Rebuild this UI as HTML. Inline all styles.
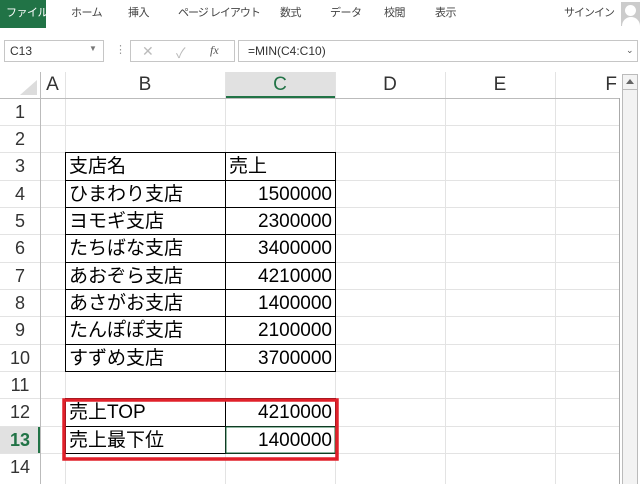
<!DOCTYPE html>
<html><head><meta charset="utf-8"><style>
*{margin:0;padding:0;box-sizing:border-box}
body{width:640px;height:484px;overflow:hidden;background:#fff;position:relative;font-family:"Liberation Sans","Noto Sans CJK JP",sans-serif}
.a{position:absolute}
.tab{position:absolute;top:0;line-height:26px;font-size:11px;color:#444;white-space:nowrap;letter-spacing:-0.5px}
.rn{position:absolute;left:0;width:40px;text-align:center;font-size:18px;color:#333;line-height:27px}
.ch{position:absolute;top:72px;line-height:26px;font-size:19px;color:#333;text-align:center}
.t{position:absolute;font-size:19px;color:#000;white-space:nowrap;line-height:27px;height:27px}
.r{left:225px;width:107px;text-align:right}
</style></head><body>
<div class="a" style="left:0;top:0;width:46px;height:28px;background:#217346"></div>
<div class="tab" style="left:6px;color:#fff">ファイル</div>
<div class="tab" style="left:71px">ホーム</div>
<div class="tab" style="left:128px">挿入</div>
<div class="tab" style="left:178px;letter-spacing:-1px">ページ レイアウト</div>
<div class="tab" style="left:280px">数式</div>
<div class="tab" style="left:330px">データ</div>
<div class="tab" style="left:384px">校閲</div>
<div class="tab" style="left:435px">表示</div>
<div class="tab" style="left:564px;letter-spacing:-1px">サインイン</div>
<div class="a" style="left:621px;top:2px;width:19px;height:24px;background:#ccc"></div>
<div class="a" style="left:625px;top:5px;width:11px;height:11px;border-radius:50%;background:#fff"></div>
<div class="a" style="left:622px;top:17px;width:18px;height:9px;border-radius:9px 9px 0 0;background:#fff"></div>

<div class="a" style="left:4px;top:40px;width:100px;height:22px;border:1px solid #c6c6c6"></div>
<div class="a" style="left:10px;top:44px;font-size:12px;color:#333">C13</div>
<div class="a" style="left:89px;top:44px;font-size:8px;color:#777">▼</div>
<div class="a" style="left:115px;top:43px;font-size:11px;color:#999">⋮</div>
<div class="a" style="left:130px;top:40px;width:105px;height:22px;border:1px solid #c6c6c6"></div>
<div class="a" style="left:142px;top:43px;font-size:14px;color:#bbb">✕</div>
<div class="a" style="left:176px;top:43px;font-size:14px;color:#bbb">✓</div>
<div class="a" style="left:210px;top:43px;font-size:12px;color:#555;font-style:italic;font-family:'Liberation Serif',serif">fx</div>
<div class="a" style="left:238px;top:40px;width:400px;height:22px;border:1px solid #c6c6c6"></div>
<div class="a" style="left:248px;top:44px;font-size:12px;color:#333">=MIN(C4:C10)</div>
<div class="a" style="left:626px;top:45px;font-size:9px;color:#555">⌄</div>

<svg class="a" style="left:0;top:0" width="640" height="484">
<rect x="225" y="72" width="110" height="26" fill="#e1e1e1"/>
<line x1="225" y1="97" x2="335" y2="97" stroke="#217346" stroke-width="2"/>
<polygon points="20,95 37,95 37,80" fill="#dcdcdc"/>
<rect x="0" y="427" width="40" height="27" fill="#e1e1e1"/>
<line x1="39" y1="427" x2="39" y2="454" stroke="#217346" stroke-width="2"/>
<g stroke="#e3e3e3" stroke-width="1">
<line x1="65.5" y1="72" x2="65.5" y2="484"/><line x1="225.5" y1="72" x2="225.5" y2="484"/>
<line x1="335.5" y1="72" x2="335.5" y2="484"/><line x1="445.5" y1="72" x2="445.5" y2="484"/>
<line x1="555.5" y1="72" x2="555.5" y2="484"/>
<line x1="0" y1="125.5" x2="620" y2="125.5"/><line x1="0" y1="152.5" x2="620" y2="152.5"/>
<line x1="0" y1="180.5" x2="620" y2="180.5"/><line x1="0" y1="207.5" x2="620" y2="207.5"/>
<line x1="0" y1="234.5" x2="620" y2="234.5"/><line x1="0" y1="262.5" x2="620" y2="262.5"/>
<line x1="0" y1="289.5" x2="620" y2="289.5"/><line x1="0" y1="316.5" x2="620" y2="316.5"/>
<line x1="0" y1="344.5" x2="620" y2="344.5"/><line x1="0" y1="371.5" x2="620" y2="371.5"/>
<line x1="0" y1="398.5" x2="620" y2="398.5"/><line x1="0" y1="426.5" x2="620" y2="426.5"/>
<line x1="0" y1="453.5" x2="620" y2="453.5"/>
</g>
<line x1="40.5" y1="72" x2="40.5" y2="484" stroke="#bbb"/>
<line x1="0" y1="98.5" x2="620" y2="98.5" stroke="#bbb"/>
<line x1="619.5" y1="98" x2="619.5" y2="484" stroke="#aaa"/>
<rect x="622.5" y="74.5" width="15" height="410" fill="#f3f3f3" stroke="#bbb"/>
<line x1="622" y1="89.5" x2="638" y2="89.5" stroke="#bbb"/>
<polygon points="626,84 634,84 630,79" fill="#666"/>
<g stroke="#000" stroke-width="1" fill="none">
<rect x="65.5" y="152.5" width="270" height="219"/>
<line x1="225.5" y1="152" x2="225.5" y2="372"/>
<line x1="65" y1="180.5" x2="336" y2="180.5"/><line x1="65" y1="207.5" x2="336" y2="207.5"/>
<line x1="65" y1="234.5" x2="336" y2="234.5"/><line x1="65" y1="262.5" x2="336" y2="262.5"/>
<line x1="65" y1="289.5" x2="336" y2="289.5"/><line x1="65" y1="316.5" x2="336" y2="316.5"/>
<line x1="65" y1="344.5" x2="336" y2="344.5"/>
<rect x="65.5" y="398.5" width="270" height="55"/>
<line x1="225.5" y1="398" x2="225.5" y2="454"/>
<line x1="65" y1="426.5" x2="336" y2="426.5"/>
</g>
<rect x="226" y="427" width="109" height="26" fill="none" stroke="#217346" stroke-width="1"/>
<rect x="64" y="400" width="273" height="59" fill="none" stroke="#e0202a" stroke-width="3.5"/>
</svg>

<div class="ch" style="left:40px;width:25px">A</div>
<div class="ch" style="left:65px;width:160px">B</div>
<div class="ch" style="left:225px;width:110px;color:#217346">C</div>
<div class="ch" style="left:335px;width:110px">D</div>
<div class="ch" style="left:445px;width:110px">E</div>
<div class="ch" style="left:555px;width:62px;text-align:right">F</div>

<div class="rn" style="top:99px">1</div><div class="rn" style="top:126px">2</div>
<div class="rn" style="top:153px">3</div><div class="rn" style="top:181px">4</div>
<div class="rn" style="top:208px">5</div><div class="rn" style="top:235px">6</div>
<div class="rn" style="top:263px">7</div><div class="rn" style="top:290px">8</div>
<div class="rn" style="top:317px">9</div><div class="rn" style="top:345px">10</div>
<div class="rn" style="top:372px">11</div><div class="rn" style="top:399px">12</div>
<div class="rn" style="top:427px;color:#217346;font-weight:bold">13</div><div class="rn" style="top:454px">14</div>

<div class="t" style="left:69px;top:153px">支店名</div><div class="t" style="left:229px;top:153px">売上</div>
<div class="t" style="left:69px;top:181px">ひまわり支店</div><div class="t r" style="top:181px">1500000</div>
<div class="t" style="left:69px;top:208px">ヨモギ支店</div><div class="t r" style="top:208px">2300000</div>
<div class="t" style="left:69px;top:235px">たちばな支店</div><div class="t r" style="top:235px">3400000</div>
<div class="t" style="left:69px;top:263px">あおぞら支店</div><div class="t r" style="top:263px">4210000</div>
<div class="t" style="left:69px;top:290px">あさがお支店</div><div class="t r" style="top:290px">1400000</div>
<div class="t" style="left:69px;top:317px">たんぽぽ支店</div><div class="t r" style="top:317px">2100000</div>
<div class="t" style="left:69px;top:345px">すずめ支店</div><div class="t r" style="top:345px">3700000</div>
<div class="t" style="left:69px;top:399px">売上TOP</div><div class="t r" style="top:399px">4210000</div>
<div class="t" style="left:69px;top:427px">売上最下位</div><div class="t r" style="top:427px">1400000</div>
</body></html>
